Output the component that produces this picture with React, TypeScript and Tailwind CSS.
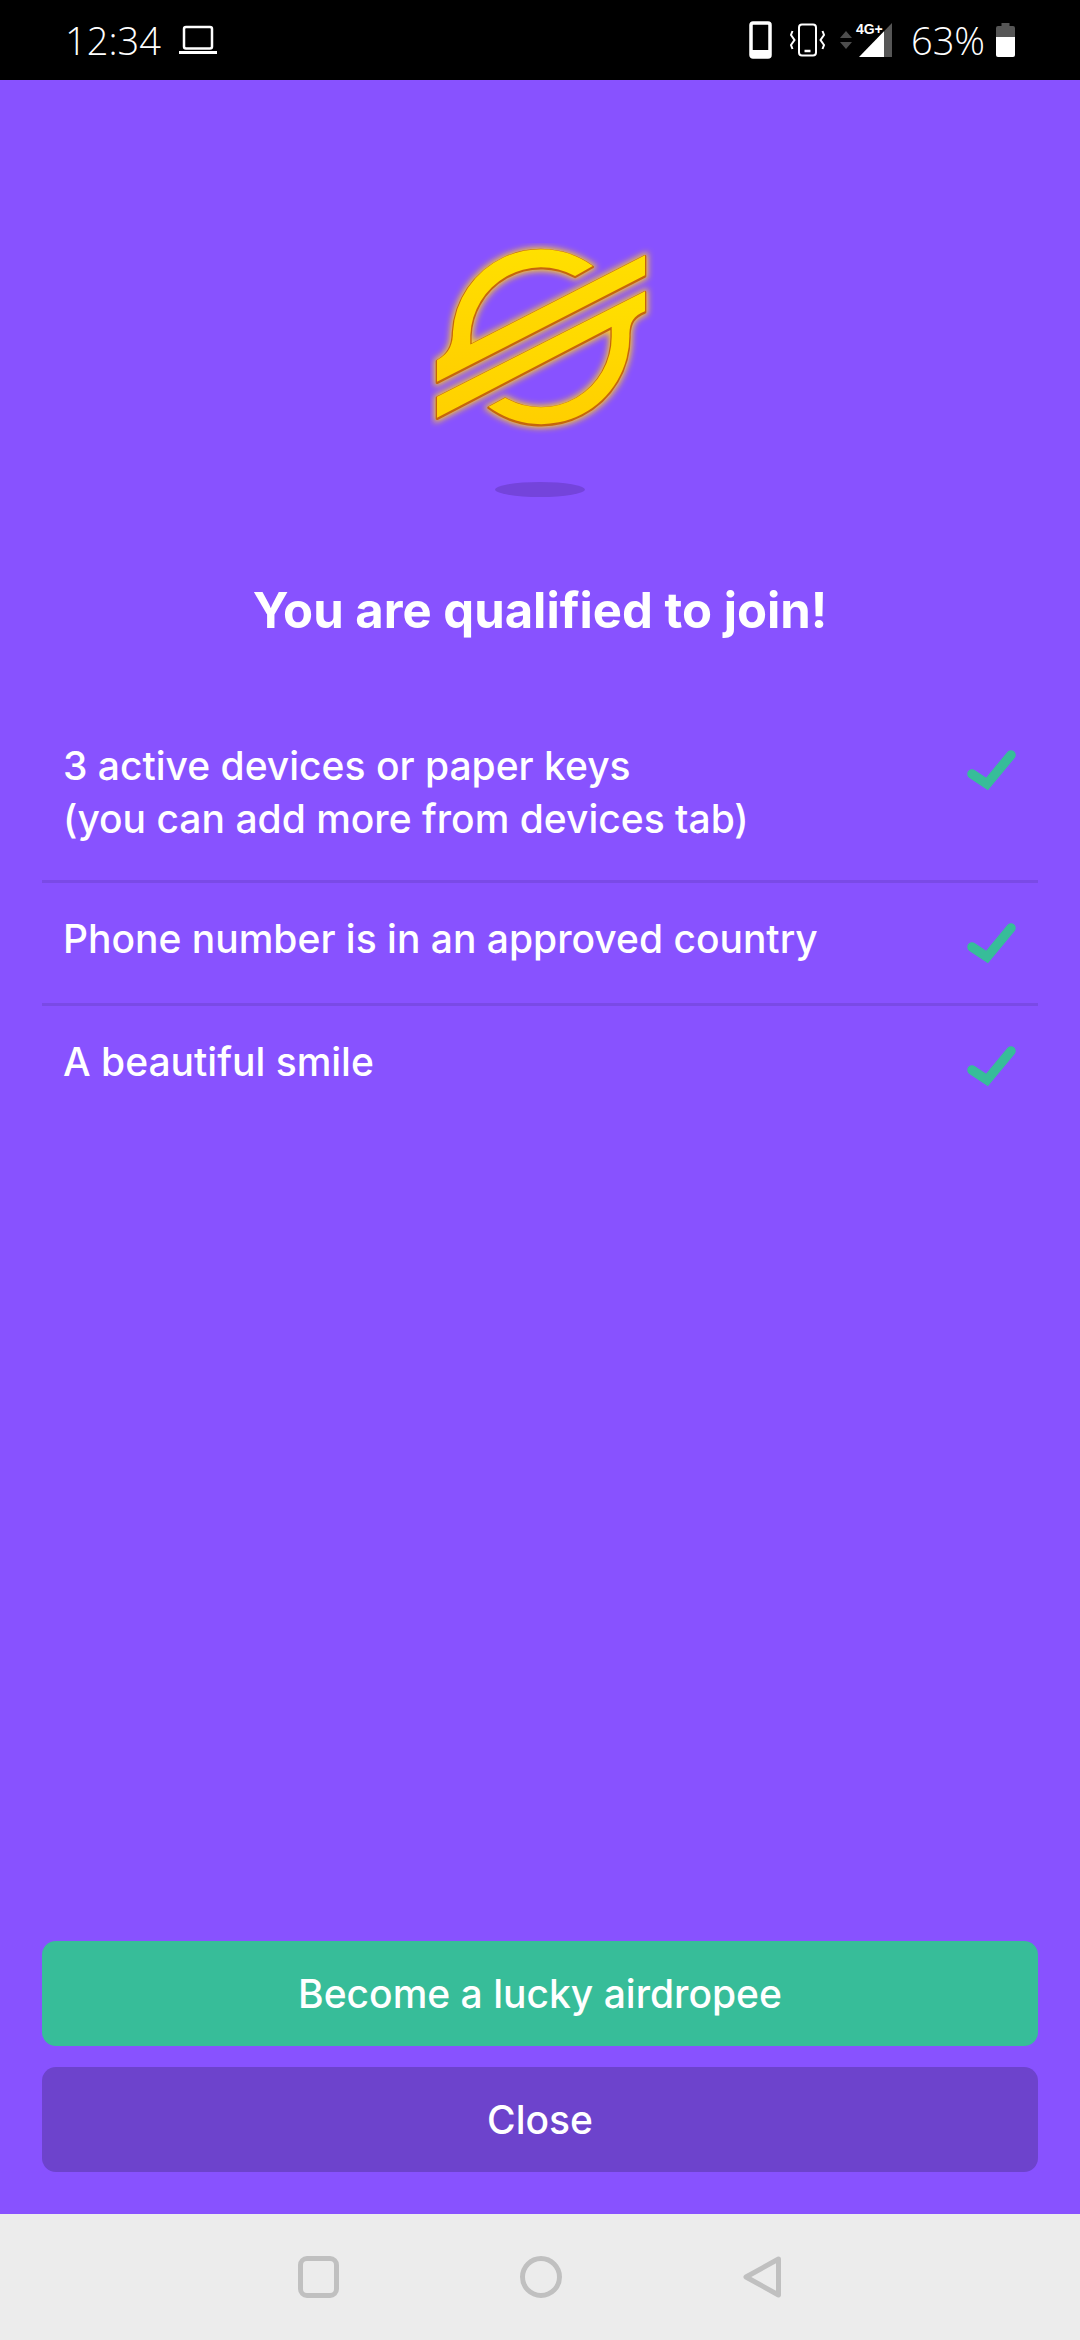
const ITEMS = [
  { lines: ["3 active devices or paper keys", "(you can add more from devices tab)"] },
  { lines: ["Phone number is in an approved country"] },
  { lines: ["A beautiful smile"] },
];

const LOGO_UPPER =
  "M578 142A265 265 0 0 0 158 340C158 372 150 405 110 425V490L735 170V110L210 378V350A213 213 0 0 1 525 172Z";
const LOGO_LOWER =
  "M110 535 735 218V278C700 292 690 310 688 345A265 265 0 0 1 265 565L315 538A213 213 0 0 0 635 350V325L110 598Z";

function Laptop() {
  return (
    <svg width="40" height="30" viewBox="0 0 40 30" fill="none" stroke="#fff">
      <rect x="6" y="2" width="28" height="21.500" rx="2" strokeWidth="2.500" />
      <path d="M1 27.500h38" strokeWidth="3" />
    </svg>
  );
}

function StatusIcons() {
  return (
    <div className="flex items-center">
      <svg width="23" height="38" viewBox="0 0 23 38" fill="none">
        <rect x="2" y="2" width="19" height="34" rx="2" stroke="#fff" strokeWidth="3.500" />
        <rect x="2" y="29" width="19" height="7" fill="#fff" />
      </svg>
      <svg className="ml-[18px]" width="35" height="34" viewBox="0 0 35 34" fill="none" stroke="#fff">
        <rect x="9" y="1.500" width="17" height="31" rx="3" strokeWidth="2" />
        <path d="M14.500 28h6" strokeWidth="2.500" />
        <path d="M2.500 8 1 12l3.500 5L1 22l1.500 4M32.500 8l1.500 4-3.500 5 3.500 5-1.500 4" strokeWidth="2" />
      </svg>
      <svg className="ml-[15px]" width="12" height="18" viewBox="0 0 12 18">
        <path d="M6 0l6 7H0zM0 11h12l-6 7z" fill="#4d4d4d" />
      </svg>
      <div className="relative ml-[7px] h-[34px] w-[33px]">
        <svg className="absolute inset-0" width="33" height="34" viewBox="0 0 33 34">
          <path d="M0 34 25 8.200V34z" fill="#fff" />
          <path d="M25 8.200 33 0v34h-8z" fill="#565656" />
        </svg>
        <span className="absolute top-[-1px] left-[-3px] font-['Liberation_Sans',sans-serif] text-[14px] leading-[14px] font-bold text-white">4G+</span>
      </div>
      <span className="ml-[19px] font-['Open_Sans',sans-serif] text-[38px] leading-[44px] font-light text-white">63%</span>
      <svg className="ml-[11px]" width="19" height="34" viewBox="0 0 19 34">
        <path d="M5.500 0h8v3H17a2 2 0 0 1 2 2v9H0V5a2 2 0 0 1 2-2h3.500z" fill="#565656" />
        <path d="M0 14h19v18a2 2 0 0 1-2 2H2a2 2 0 0 1-2-2z" fill="#fff" />
      </svg>
    </div>
  );
}

// Coordinates are in the 3x crop of the mark, hence the viewBox
function StellarLogo() {
  return (
    <svg className="ml-[7px]" width="227" height="193" viewBox="90 70 680 580" fill="none">
      <defs>
        <filter id="glow" x="-20%" y="-20%" width="140%" height="140%">
          <feGaussianBlur stdDeviation="10" />
        </filter>
        <linearGradient id="gold" x1="0" y1="0" x2="0" y2="1">
          <stop offset="0" stopColor="#ffe000" />
          <stop offset="1" stopColor="#ffcf00" />
        </linearGradient>
      </defs>
      <g filter="url(#glow)" fill="#ffd21f" stroke="#ffd21f" strokeWidth="16">
        <path d={LOGO_UPPER} />
        <path d={LOGO_LOWER} />
      </g>
      <g fill="#c5650e" stroke="#c5650e" strokeWidth="8" strokeLinejoin="round">
        <path d={LOGO_UPPER} />
        <path d={LOGO_LOWER} />
      </g>
      <g fill="url(#gold)" transform="translate(0 -3)">
        <path d={LOGO_UPPER} />
        <path d={LOGO_LOWER} />
      </g>
    </svg>
  );
}

function Check() {
  return (
    <svg className="mt-[8px]" width="56" height="48" viewBox="0 0 56 48" fill="none">
      <path d="M8 27 23 37 47 8" stroke="#37bd99" strokeWidth="9.500" strokeLinecap="round" />
    </svg>
  );
}

export default function App() {
  return (
    <div className="flex h-[2340px] w-[1080px] flex-col bg-[#8852ff] font-['Inter','Noto_Sans',sans-serif] text-white">
      <div className="flex h-[80px] items-center justify-between bg-black pr-[65px] pl-[65px]">
        <div className="flex items-center gap-[17px]">
          <span className="font-['Open_Sans',sans-serif] text-[38px] leading-[44px] font-light">12:34</span>
          <Laptop />
        </div>
        <StatusIcons />
      </div>

      <div className="flex flex-1 flex-col px-[42px]">
        <div className="mt-[163px] flex flex-col items-center">
          <StellarLogo />
          <div className="mt-[46px] h-[15px] w-[90px] rounded-[50%] bg-[#7444db]" />
        </div>
        <h1 className="mt-[82px] text-center text-[49px] leading-[64px] font-bold">You are qualified to join!</h1>

        <div className="mt-[67px] flex flex-col">
          {ITEMS.map((item, i) => (
            <div
              key={i}
              className={`flex items-start justify-between pt-[29px] pr-[18px] pb-[35px] pl-[21px] ${i < 2 ? "border-b-[3px] border-[#7a4ae6]" : ""}`}
            >
              <div className="text-[39px] leading-[53px] font-medium">
                {item.lines.map((l) => (
                  <div key={l}>{l}</div>
                ))}
              </div>
              <Check />
            </div>
          ))}
        </div>

        <div className="mt-auto flex flex-col gap-[21px] pb-[42px]">
          <button className="flex h-[105px] items-center justify-center rounded-[14px] bg-[#37bd99] pt-[2px] text-[39px] font-medium">Become a lucky airdropee</button>
          <button className="flex h-[105px] items-center justify-center rounded-[14px] bg-[#6d43cc] pt-[2px] text-[39px] font-medium">Close</button>
        </div>
      </div>

      <div className="flex h-[126px] items-center justify-center gap-[181px] bg-[#ececec]">
        <div className="h-[42px] w-[41px] rounded-[9px] border-[5px] border-[#c0c0c0]" />
        <div className="h-[42px] w-[42px] rounded-full border-[5px] border-[#c0c0c0]" />
        <svg width="39" height="42" viewBox="0 0 39 42" fill="none">
          <path d="M35.500 3 3 21l32.500 18z" stroke="#c0c0c0" strokeWidth="5" strokeLinejoin="round" />
        </svg>
      </div>
    </div>
  );
}
